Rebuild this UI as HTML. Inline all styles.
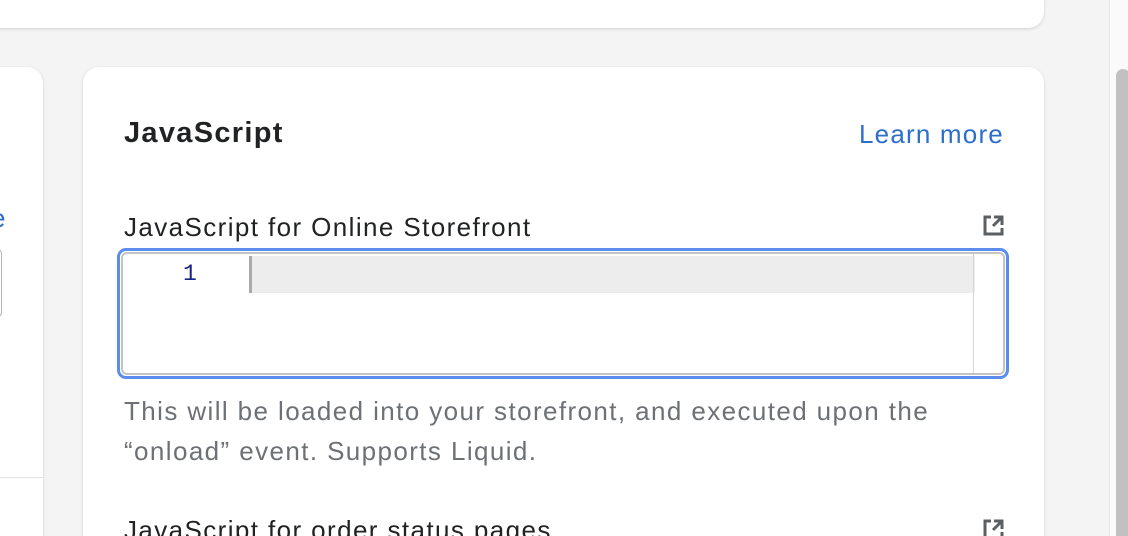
<!DOCTYPE html>
<html><head><style>
*{margin:0;padding:0;box-sizing:border-box}
html,body{width:1128px;height:536px;overflow:hidden}
body{background:#f4f4f4;position:relative;font-family:"Liberation Sans",sans-serif;color:#202223}
.card{position:absolute;background:#fff;border-radius:16px;box-shadow:0 1px 3px rgba(0,0,0,.15)}
.abs{position:absolute;white-space:nowrap}
</style></head><body>
<div class="card" style="left:-40px;top:-40px;width:1084px;height:68px"></div>
<div class="card" style="left:-40px;top:67px;width:83px;height:469px;border-bottom-left-radius:0;border-bottom-right-radius:0"></div>
<div class="abs" style="left:-9px;top:203px;font-size:26px;color:#2c6ecb">e</div>
<div style="position:absolute;left:-20px;top:248px;width:22px;height:70px;border:1.5px solid #b5b5b5;border-radius:6px"></div>
<div style="position:absolute;left:0;top:477px;width:43px;height:1px;background:#e1e3e5"></div>
<div class="card" style="left:83px;top:67px;width:961px;height:469px;border-bottom-left-radius:0;border-bottom-right-radius:0"></div>
<div class="abs" style="left:124px;top:117px;font-size:29px;font-weight:bold;letter-spacing:1.3px">JavaScript</div>
<div class="abs" style="left:859px;top:119px;font-size:26px;color:#2c6ecb;letter-spacing:1.2px">Learn more</div>
<div class="abs" style="left:124px;top:212px;font-size:26px;letter-spacing:1.4px">JavaScript for Online Storefront</div>
<svg style="position:absolute;left:983px;top:215px" width="21" height="21" viewBox="0 0 21 21"><path d="M8 2H2v17h17v-6" fill="none" stroke="#5c5f62" stroke-width="3"/><path d="M11 2h8v8M19 2l-9 9" fill="none" stroke="#5c5f62" stroke-width="3"/></svg>
<div style="position:absolute;left:117px;top:248px;width:892px;height:131px;border:3px solid #5b8def;border-radius:9px"></div>
<div style="position:absolute;left:121px;top:252px;width:884px;height:123px;border:2px solid #c4c4c4;border-radius:6px;overflow:hidden;background:#fff">
 <div style="position:absolute;left:129px;top:2px;width:723px;height:37px;background:#ededed"></div>
 <div style="position:absolute;left:126px;top:2px;width:3px;height:37px;background:#aaa"></div>
 <div style="position:absolute;left:850px;top:0;width:1px;height:123px;background:#d5d5d5"></div>
 <div class="abs" style="left:60px;top:7px;font-size:23px;font-family:'Liberation Mono',monospace;color:#1a237e">1</div>
</div>
<div class="abs" style="left:124px;top:391px;font-size:26px;color:#6d7175;line-height:40px;letter-spacing:1.4px">This will be loaded into your storefront, and executed upon the<br>“onload” event. Supports Liquid.</div>
<div class="abs" style="left:124px;top:515px;font-size:26px;letter-spacing:1.4px">JavaScript for order status pages</div>
<svg style="position:absolute;left:983px;top:519px" width="21" height="21" viewBox="0 0 21 21"><path d="M8 2H2v17h17v-6" fill="none" stroke="#5c5f62" stroke-width="3"/><path d="M11 2h8v8M19 2l-9 9" fill="none" stroke="#5c5f62" stroke-width="3"/></svg>
<div style="position:absolute;left:1109px;top:0;width:19px;height:536px;background:#fafafa;border-left:1px solid #e6e6e6"></div>
<div style="position:absolute;left:1116px;top:69px;width:14px;height:480px;background:#c1c1c1;border-radius:7px"></div>
</body></html>
